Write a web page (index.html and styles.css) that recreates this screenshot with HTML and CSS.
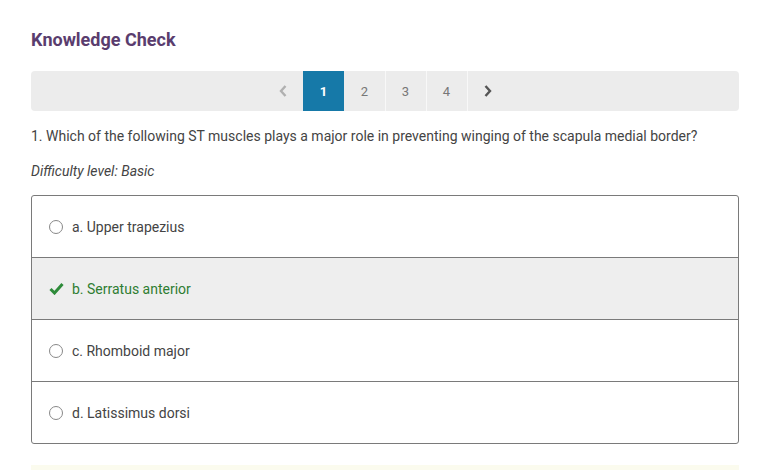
FILE: index.html
```html
<!DOCTYPE html>
<html>
<head>
<meta charset="utf-8">
<link rel="stylesheet" href="styles.css">
</head>
<body>
<div class="page">
  <h2 class="title">Knowledge Check</h2>
  <nav class="pager">
    <div class="pages">
      <span class="pbtn arrow disabled"><svg width="10" height="14" viewBox="0 0 10 14"><path d="M7.5 2 L3 7 L7.5 12" fill="none" stroke="currentColor" stroke-width="2.4"/></svg></span>
      <span class="pbtn active">1</span>
      <span class="pbtn">2</span>
      <span class="pbtn">3</span>
      <span class="pbtn">4</span>
      <span class="pbtn arrow"><svg width="10" height="14" viewBox="0 0 10 14"><path d="M2.5 2 L7 7 L2.5 12" fill="none" stroke="currentColor" stroke-width="2.4"/></svg></span>
    </div>
  </nav>
  <p class="question">1. Which of the following ST muscles plays a major role in preventing winging of the scapula medial border?</p>
  <p class="difficulty">Difficulty level: Basic</p>
  <div class="options">
    <div class="option"><span class="radio"></span>a. Upper trapezius</div>
    <div class="option correct"><svg class="check" width="15" height="13" viewBox="0 0 15 13"><path d="M1.5 7 L5.5 11 L13.5 2" fill="none" stroke="currentColor" stroke-width="3"/></svg>b. Serratus anterior</div>
    <div class="option"><span class="radio"></span>c. Rhomboid major</div>
    <div class="option"><span class="radio"></span>d. Latissimus dorsi</div>
  </div>
  <div class="feedback"></div>
</div>
</body>
</html>
```

FILE: styles.css
```css
html, body {
  margin: 0;
  padding: 0;
  background: #fff;
}
body {
  font-family: Roboto, "Liberation Sans", sans-serif;
  color: #444;
  overflow: hidden;
}
.page {
  padding: 28px 28px 0 31px;
}
.title {
  margin: 0;
  font-size: 18px;
  font-weight: 700;
  color: #5a3d6e;
  line-height: 24px;
}
.pager {
  margin-top: 19px;
  background: #ececec;
  border-radius: 4px;
  height: 40px;
  display: flex;
  justify-content: center;
}
.pages {
  display: flex;
}
.pbtn {
  width: 40px;
  height: 40px;
  display: flex;
  align-items: center;
  justify-content: center;
  font-size: 13px;
  color: #777;
  border-left: 1px solid #f8f8f8;
}
.pbtn:first-child {
  border-left: none;
}
.pbtn.active {
  background: #1679a8;
  color: #fff;
  font-weight: 700;
  border-left-color: #1679a8;
}
.pbtn.active + .pbtn {
  border-left-color: #ececec;
}
.arrow {
  color: #555;
}
.arrow.disabled {
  color: #b0b0b0;
}
.question {
  margin: 16px 0 0;
  font-size: 14px;
  line-height: 18px;
  color: #444;
}
.difficulty {
  margin: 17px 0 0;
  font-size: 14px;
  line-height: 18px;
  font-style: italic;
  color: #444;
}
.options {
  margin-top: 15px;
  border: 1px solid #7a7a7a;
  border-radius: 3px;
  overflow: hidden;
}
.option {
  height: 61px;
  display: flex;
  align-items: center;
  padding-left: 17px;
  font-size: 14px;
  color: #444;
  border-top: 1px solid #7a7a7a;
}
.option:first-child {
  border-top: none;
}
.radio {
  width: 12px;
  height: 12px;
  border: 1px solid #888;
  border-radius: 50%;
  margin-right: 9px;
  background: #fff;
}
.option.correct {
  background: #eeeeee;
  color: #2e7d32;
}
.check {
  color: #2e8b3a;
  margin-right: 8px;
}
.feedback {
  margin-top: 21px;
  height: 5px;
  background: #fbfbee;
}
```
